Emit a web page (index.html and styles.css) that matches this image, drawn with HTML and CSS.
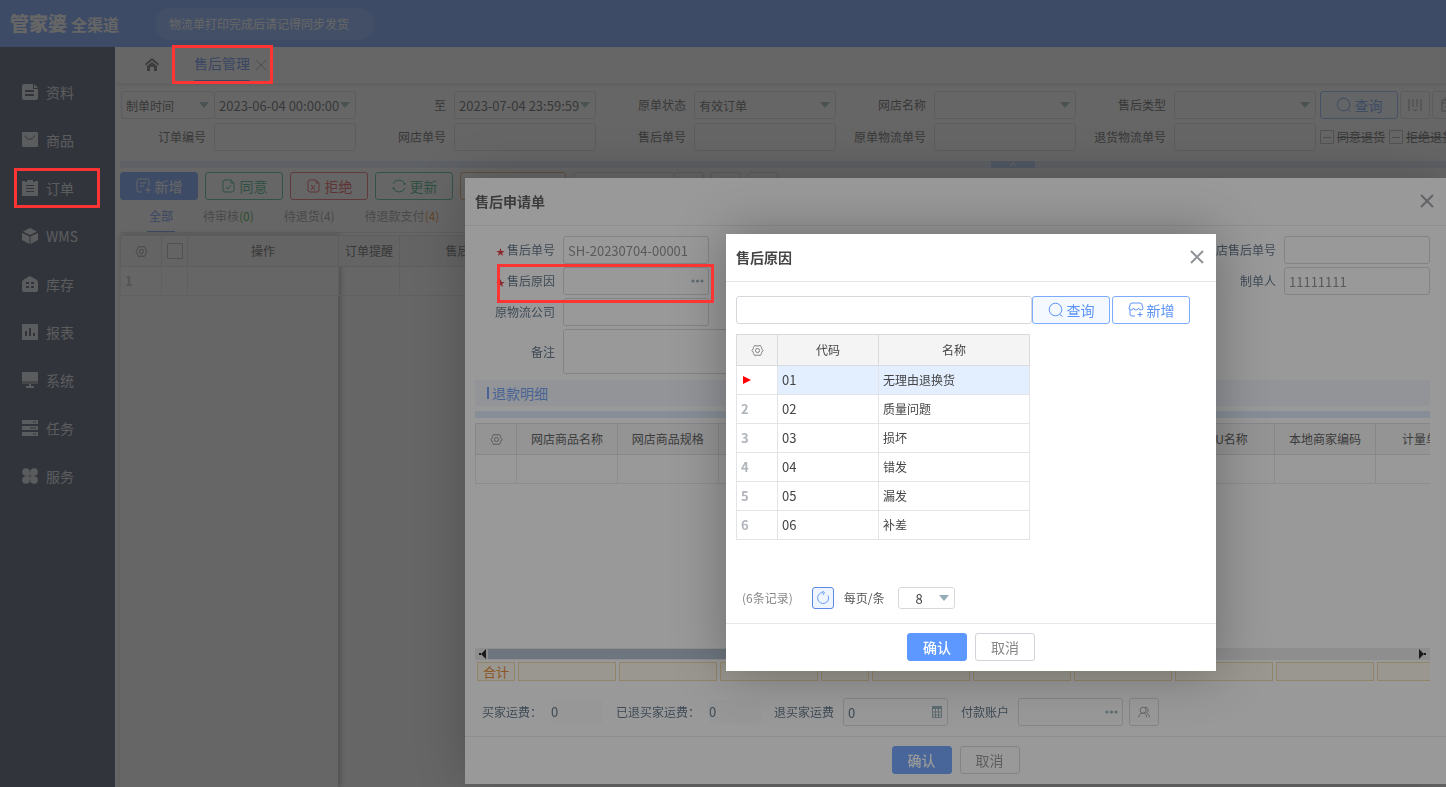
FILE: index.html
```html
<!DOCTYPE html>
<html lang="zh-CN">

<head>
    <meta charset="utf-8">
    <meta name="viewport" content="width=device-width, initial-scale=1.0">
    <title>售后管理</title>
    <link rel="stylesheet" href="styles.css">
</head>

<body>
    <svg class="symbols" aria-hidden="true">
        <symbol id="i-gear" viewBox="0 0 14 14">
            <path d="M4 1.500L5.500 2h3L10 1.500l1.500 2.500v1L13 7l-1.500 2v1L10 12.500 8.500 12h-3L4 12.500 2.500 10V9L1 7l1.500-2V4z" />
            <circle cx="7" cy="7" r="2.200" />
        </symbol>
        <symbol id="i-search" viewBox="0 0 16 16">
            <circle cx="7.500" cy="7.500" r="6.300" />
            <path d="M12 12.500l2.500 2" />
        </symbol>
        <symbol id="i-close" viewBox="0 0 14 14">
            <path d="M1 1l12 12M13 1L1 13" />
        </symbol>
        <symbol id="i-dots" viewBox="0 0 14 4">
            <circle cx="2" cy="2" r="1.600" />
            <circle cx="6.500" cy="2" r="1.600" />
            <circle cx="11" cy="2" r="1.600" />
        </symbol>
    </svg>

    <header class="top">
        <h1 class="logo">管家婆<small>全渠道</small></h1>
        <p class="notice">物流单打印完成后请记得同步发货</p>
    </header>

    <div class="page">
        <nav class="side">
            <a href="#"><svg viewBox="0 0 16 16"><path d="M2 0h9v5h5v9a2 2 0 0 1-2 2H2a2 2 0 0 1-2-2V2a2 2 0 0 1 2-2z" /><path d="M12 0l4 4h-4z" /><path class="cut" d="M3 7h9M3 11h9" /></svg>资料</a>
            <a href="#"><svg viewBox="0 0 16 16"><rect width="16" height="15" rx="1" /><path class="cut thin" d="M3 3.500c1 5 8 5 9.500 0" /></svg>商品</a>
            <a href="#"><svg viewBox="0 0 16 16"><path d="M0 1h3v1h2V0h6v2h2V1h3v14a1 1 0 0 1-1 1H1a1 1 0 0 1-1-1z" /><path class="cut thin" d="M4 5.500h8M4 8.500h8M4 11.500h8" /></svg>订单</a>
            <a href="#"><svg viewBox="0 0 16 16"><path d="M8 0l7 3.500L8 7 1 3.500zM0 5l7.500 3.500V16L0 12zM16 5L8.500 8.500V16L16 12z" /></svg>WMS</a>
            <a href="#"><svg viewBox="0 0 16 16"><path d="M8 0l7 4 1 2v8a2 2 0 0 1-2 2H2a2 2 0 0 1-2-2V6l1-2z" /><path class="cut" d="M4 7h3M9 7h3M4 11h3M9 11h3" /></svg>库存</a>
            <a href="#"><svg viewBox="0 0 16 16"><rect width="16" height="16" rx="1" /><path class="cut" d="M4 7v5M8 4v8M12 9v3" /></svg>报表</a>
            <a href="#"><svg viewBox="0 0 16 16"><path d="M0 0h16v9H0z" /><path class="pale" d="M0 9h16v3H0z" /><path d="M7 12h2v2h3v2H4v-2h3z" /></svg>系统</a>
            <a href="#"><svg viewBox="0 0 16 16"><path d="M0 0h16v4H0zM0 6h16v4H0zM0 12h16v4H0z" /><path class="cut thin" d="M11 2h3M8 8h6M11 14h3" /></svg>任务</a>
            <a href="#"><svg viewBox="0 0 16 16"><circle cx="4" cy="4" r="3.800" /><circle cx="12" cy="4" r="3.800" /><circle cx="4" cy="12" r="3.800" /><circle cx="12" cy="12" r="3.800" /><path d="M4 4h3.700v3.700H4zM8.300 4H12v3.700H8.300zM4 8.300h3.700V12H4zM8.300 8.300H12V12H8.300z" /></svg>服务</a>
        </nav>

        <main class="main">
            <div class="tabs">
                <a class="home" href="#" aria-label="首页"><svg viewBox="0 0 14 13"><path d="M7 0l7 6-1 1.500L7 2.500 1 7.500 0 6z" /><path d="M7 4l5 4v5H9V9H5v4H2V8z" /></svg></a>
                <a class="tab" href="#">售后管理</a>
                <button class="tab-close" aria-label="关闭标签"><svg><use href="#i-close" /></svg></button>
            </div>

            <form class="filters">
                <div class="filter">
                    <span class="drop wide"><select aria-label="时间类型"><option>制单时间</option></select></span>
                    <span class="drop box"><input type="text" aria-label="开始时间" value="2023-06-04 00:00:00"></span>
                </div>
                <div class="filter">
                    <label for="f-to">至</label>
                    <span class="drop box"><input type="text" id="f-to" value="2023-07-04 23:59:59"></span>
                </div>
                <div class="filter">
                    <label for="f-state">原单状态</label>
                    <span class="drop box"><select id="f-state"><option>有效订单</option></select></span>
                </div>
                <div class="filter">
                    <label for="f-shop">网店名称</label>
                    <span class="drop box"><select id="f-shop"><option></option></select></span>
                </div>
                <div class="filter">
                    <label for="f-type">售后类型</label>
                    <span class="drop box"><select id="f-type"><option></option></select></span>
                </div>
                <div class="filter-end">
                    <button type="button" class="btn blue"><svg><use href="#i-search" /></svg>查询</button>
                    <button type="button" class="btn square" aria-label="列设置"><svg viewBox="0 0 14 14"><path d="M1 1v12M5 1v8M9 1v8M13 1v12M5 11l2 2 2-2" /></svg></button>
                    <button type="button" class="btn square" aria-label="保存条件"><svg viewBox="0 0 14 14"><path d="M2 2h10v11H2zM2 5h10M5 0v3M9 0v3M5 9h5" /></svg></button>
                </div>
                <div class="filter"><label for="f-no">订单编号</label><span class="box"><input type="text" id="f-no"></span></div>
                <div class="filter"><label for="f-shopno">网店单号</label><span class="box"><input type="text" id="f-shopno"></span></div>
                <div class="filter"><label for="f-after">售后单号</label><span class="box"><input type="text" id="f-after"></span></div>
                <div class="filter"><label for="f-ship">原单物流单号</label><span class="box"><input type="text" id="f-ship"></span></div>
                <div class="filter"><label for="f-back">退货物流单号</label><span class="box"><input type="text" id="f-back"></span></div>
                <div class="filter-end checks">
                    <label><input type="checkbox" class="minus">同意退货</label>
                    <label><input type="checkbox" class="minus">拒绝退货</label>
                </div>
            </form>

            <div class="fold"><button aria-label="收起"><svg viewBox="0 0 8 5"><path d="M1 4l3-3 3 3" /></svg></button></div>

            <div class="tools">
                <button class="btn solid"><svg viewBox="0 0 16 16"><path d="M6 14H3a2 2 0 0 1-2-2V3a2 2 0 0 1 2-2h8a2 2 0 0 1 2 2v5M4 5h6M4 8h4M12 9v6M9 12h6" /></svg>新增</button>
                <button class="btn green"><svg viewBox="0 0 16 16"><path d="M4 2h6l3 3v7a2 2 0 0 1-2 2H4a2 2 0 0 1-2-2V4a2 2 0 0 1 2-2zM10 2v3h3M5 9l2 2 3-4" /></svg>同意</button>
                <button class="btn red"><svg viewBox="0 0 16 16"><path d="M4 2h6l3 3v7a2 2 0 0 1-2 2H4a2 2 0 0 1-2-2V4a2 2 0 0 1 2-2zM10 2v3h3M5 7l4 5M9 7l-4 5" /></svg>拒绝</button>
                <button class="btn green"><svg viewBox="0 0 16 16"><path d="M2 6a6.500 6.500 0 0 1 12 0M14 10a6.500 6.500 0 0 1-12 0M1 10h3M15 6h-3" /></svg>更新</button>
                <button class="btn orange" aria-label="退款"></button>
                <button class="btn group" aria-label="更多"></button>
                <button class="btn square joined" aria-label="展开"></button>
                <button class="btn square" aria-label="打印"></button>
                <button class="btn square" aria-label="导出"></button>
            </div>

            <div class="states">
                <a class="on" href="#">全部</a>
                <a href="#">待审核<b class="g">(0)</b></a>
                <a href="#">待退货<b>(4)</b></a>
                <a href="#">待退款支付<b class="o">(4)</b></a>
            </div>

            <div class="sheet">
                <div class="frozen">
                    <table class="grid">
                        <tr><th class="c-no"><svg class="gear"><use href="#i-gear" /></svg></th><th class="c-check"><input type="checkbox" aria-label="全选"></th><th class="c-op">操作</th></tr>
                        <tr><td class="no">1</td><td></td><td></td></tr>
                    </table>
                </div>
                <table class="grid rest">
                    <tr><th class="c-tip">订单提醒</th><th class="c-after">售后单号</th><th></th></tr>
                    <tr><td></td><td></td><td></td></tr>
                </table>
            </div>
        </main>
    </div>

    <div class="mask"></div>

    <section class="dialog apply">
        <div class="dialog-head">
            <h2>售后申请单</h2>
            <button class="close" aria-label="关闭"><svg><use href="#i-close" /></svg></button>
        </div>
        <div class="dialog-body">
            <div class="fields">
                <label class="must" for="a-no">售后单号</label>
                <span class="box"><input type="text" id="a-no" value="SH-20230704-00001" disabled></span>
                <label for="a-shop">网店售后单号</label>
                <span class="box"><input type="text" id="a-shop"></span>
                <label class="must" for="a-why">售后原因</label>
                <span class="box"><input type="text" id="a-why"><svg class="dots"><use href="#i-dots" /></svg></span>
                <label for="a-man">制单人</label>
                <span class="box"><input type="text" id="a-man" value="11111111" disabled></span>
                <label for="a-ship">原物流公司</label>
                <span class="box"><input type="text" id="a-ship"></span>
                <label class="note" for="a-note">备注</label>
                <textarea id="a-note"></textarea>
            </div>
            <h3 class="part">退款明细</h3>
            <div class="line"></div>
            <div class="scroll">
                <table class="grid detail">
                    <tr><th class="c-no"><svg class="gear"><use href="#i-gear" /></svg></th><th>网店商品名称</th><th>网店商品规格</th><th></th><th class="half"></th><th></th><th></th><th></th><th>SKU名称</th><th>本地商家编码</th><th>计量单位</th></tr>
                    <tr><td></td><td></td><td></td><td></td><td></td><td></td><td></td><td></td><td></td><td></td><td></td></tr>
                </table>
            </div>
            <div class="hbar">
                <svg viewBox="0 0 8 10"><path d="M7 0v10L2 5zM0 4h2v2H0z" /></svg>
                <span class="thumb"></span>
                <svg viewBox="0 0 8 10"><path d="M1 0v10l5-5zM6 4h2v2H6z" /></svg>
            </div>
            <div class="sum">
                <span class="first">合计</span><span></span><span></span><span></span><span class="half"></span><span></span><span></span><span></span><span></span><span></span><span></span>
            </div>
            <div class="fees">
                <span>买家运费：</span><output>0</output>
                <span>已退买家运费：</span><output>0</output>
                <label for="a-fee">退买家运费</label>
                <span class="box"><input type="text" id="a-fee" value="0"><svg class="calc" viewBox="0 0 10 12"><path d="M0 0h10v3H0z" /><path class="cells" d="M.5 3v8.500h9V3M.5 6h9M.5 9h9M3.500 3v8M6.500 3v8" /></svg></span>
                <label for="a-pay">付款账户</label>
                <span class="box"><input type="text" id="a-pay"><svg class="dots"><use href="#i-dots" /></svg></span>
                <button class="btn square" aria-label="选择账户"><svg viewBox="0 0 16 16"><circle cx="7" cy="6" r="3.500" /><path d="M2 14c0-3 2-4.500 5-4.500s4 2 4 4.500M9 2.500a3.500 3.500 0 0 1 2 6.500c2 1 3 3 3 5" /></svg></button>
            </div>
        </div>
        <div class="dialog-foot">
            <button class="ok">确认</button>
            <button class="cancel">取消</button>
        </div>
    </section>

    <div class="mask"></div>

    <section class="dialog reason">
        <div class="dialog-head">
            <h2>售后原因</h2>
            <button class="close" aria-label="关闭"><svg><use href="#i-close" /></svg></button>
        </div>
        <div class="dialog-body">
            <div class="search">
                <span class="box"><input type="text" aria-label="关键字"></span>
                <button class="btn blue"><svg><use href="#i-search" /></svg>查询</button>
                <button class="btn blue plain"><svg viewBox="0 0 16 16"><path d="M7 14H4a2 2 0 0 1-2-2V8M1 6l1-3q0-2 2-2h8q2 0 2 2l1 3q0 2-2 2t-2.500-2Q10 8 8 8T5.500 6Q5 8 3 8T1 6M12 10v5M9.500 12.500h5" /></svg>新增</button>
            </div>
            <table class="grid reasons">
                <tr><th class="c-no"><svg class="gear"><use href="#i-gear" /></svg></th><th class="c-code">代码</th><th>名称</th></tr>
                <tr class="on"><td class="no"><i class="mark"></i></td><td>01</td><td class="cn">无理由退换货</td></tr>
                <tr><td class="no">2</td><td>02</td><td class="cn">质量问题</td></tr>
                <tr><td class="no">3</td><td>03</td><td class="cn">损坏</td></tr>
                <tr><td class="no">4</td><td>04</td><td class="cn">错发</td></tr>
                <tr><td class="no">5</td><td>05</td><td class="cn">漏发</td></tr>
                <tr><td class="no">6</td><td>06</td><td class="cn">补差</td></tr>
            </table>
            <div class="pager">
                <span>(6条记录)</span>
                <button aria-label="刷新"><svg viewBox="0 0 14 14"><path d="M12 4.500a5.500 5.500 0 1 1-5-3M6 0l2.500 1.500L7 4" /></svg></button>
                <label for="size">每页/条</label>
                <span class="drop"><select id="size"><option>8</option></select></span>
            </div>
        </div>
        <div class="dialog-foot">
            <button class="ok">确认</button>
            <button class="cancel">取消</button>
        </div>
    </section>

    <div class="hint hint-tab"></div>
    <div class="hint hint-menu"></div>
    <div class="hint hint-reason"></div>
</body>

</html>
```
FILE: styles.css
```css
* {
    box-sizing: border-box;
}

body {
    margin: 0;
    height: 100vh;
    overflow: hidden;
    display: flex;
    flex-direction: column;
    background-color: white;
    color: #444;
    font-family: "Noto Sans CJK SC", sans-serif;
    font-size: 12px;
    line-height: 18px;
}

a {
    color: inherit;
    text-decoration: none;
}

input,
select,
textarea,
button {
    font-family: inherit;
    font-size: 12px;
    color: inherit;
    margin: 0;
}

svg {
    fill: none;
    stroke: currentColor;
    flex: none;
}

.symbols {
    display: none;
}

/* top bar */
.top {
    flex: none;
    height: 47px;
    display: flex;
    align-items: center;
    background-color: #5c93ff;
    color: white;
}

.logo {
    width: 155px;
    margin: 0;
    padding-left: 10px;
    font-size: 19px;
    font-weight: 900;
}

.logo small {
    margin-left: 4px;
    font-size: 16px;
    font-weight: 700;
}

.notice {
    margin: 0;
    width: 220px;
    padding: 7px 14px;
    border-radius: 16px;
    background-color: #6ea2ff;
}

.page {
    flex: 1;
    display: flex;
    min-height: 0;
}

/* left menu */
.side {
    flex: none;
    width: 115px;
    padding-top: 21px;
    background-color: #2b3753;
    color: #d3d6dc;
}

.side a {
    display: flex;
    align-items: center;
    height: 48px;
    padding-left: 22px;
    gap: 8px;
    font-size: 14px;
}

.side svg {
    width: 16px;
    height: 16px;
    fill: currentColor;
    stroke: none;
}

.side .cut {
    fill: none;
    stroke: #2b3753;
    stroke-width: 2;
}

.side .thin {
    stroke-width: 1;
}

.side .pale {
    opacity: 0.5;
}

.main {
    flex: 1;
    min-width: 0;
    display: flex;
    flex-direction: column;
    overflow: hidden;
}

.tabs {
    flex: none;
    height: 37px;
    display: flex;
    align-items: flex-start;
    border-bottom: 1px solid #eee;
    box-shadow: 0 1px 3px #ddd;
}

.home {
    margin: 11px 35px 0 30px;
}

.home svg {
    display: block;
    width: 14px;
    height: 13px;
    fill: #555;
    stroke: none;
}

.tab {
    height: 34px;
    padding-top: 7px;
    border-bottom: 1px solid #4a80f0;
    color: #4a80f0;
    font-size: 14px;
}

.tab-close {
    margin: 12px 0 0 5px;
    padding: 0;
    border: none;
    background: none;
    color: #888;
}

.tab-close svg {
    display: block;
    width: 12px;
    height: 12px;
}

/* filters */
.filters {
    flex: none;
    display: grid;
    grid-template-columns: repeat(5, 240px) auto;
    gap: 4px 0;
    padding: 7px 0 10px 1px;
}

.filter {
    display: flex;
    align-items: center;
    justify-content: flex-end;
    gap: 8px;
}

.filter:first-child {
    gap: 0;
}

.box {
    display: flex;
    align-items: center;
    width: 142px;
    height: 28px;
    border: 1px solid #d5d7dc;
    border-radius: 3px;
}

.box input,
.drop select {
    width: 100%;
    height: 26px;
    padding: 0 4px;
    border: none;
    background: none;
    outline: none;
    appearance: none;
}

.box input {
    font-size: 13px;
}

.drop {
    position: relative;
}

.drop::after {
    content: "";
    position: absolute;
    right: 5px;
    top: 10px;
    border: 5px solid transparent;
    border-top: 6px solid #93adb5;
    border-bottom: none;
}

.wide {
    width: 93px;
    height: 28px;
    border: 1px solid #d5d7dc;
    border-right: none;
    border-radius: 3px;
}

.filter-end {
    display: flex;
    align-items: center;
    gap: 2px;
    padding-left: 4px;
    white-space: nowrap;
}

.checks {
    gap: 4px;
}

.checks label {
    display: flex;
    align-items: center;
    gap: 3px;
    text-decoration: line-through;
}

.minus,
.grid input {
    appearance: none;
    width: 14px;
    height: 14px;
    border: 1px solid #aaa;
    border-radius: 1px;
}

.minus {
    display: flex;
    align-items: center;
    justify-content: center;
}

.minus::after {
    content: "";
    width: 8px;
    border-top: 1px solid #999;
}

.btn {
    display: flex;
    align-items: center;
    justify-content: center;
    gap: 3px;
    flex: none;
    width: 78px;
    height: 28px;
    padding: 0;
    border: 1px solid #d5d7dc;
    border-radius: 3px;
    background: none;
    font-size: 14px;
}

.btn svg {
    width: 16px;
    height: 16px;
}

.btn.square {
    width: 30px;
    color: #888;
}

.btn.square svg {
    width: 14px;
    height: 14px;
}

.btn.blue {
    color: #5c93f5;
    border-color: #7cabff;
    background-color: #f3f9ff;
}

.btn.plain {
    background-color: white;
}

.btn.solid {
    color: white;
    border-color: #5c93ff;
    background-color: #5c93ff;
}

.btn.green {
    color: #1ea56e;
    border-color: #2fae7c;
}

.btn.red {
    color: #e0363d;
    border-color: #e04a50;
}

.btn.orange {
    width: 106px;
    border-color: #e69b4c;
}

.btn.group {
    width: 102px;
}

.btn.joined {
    margin-left: -8px;
}

.fold {
    flex: none;
    height: 7px;
    margin-left: 5px;
    display: flex;
    justify-content: center;
    padding-left: 459px;
    background-color: #dce6f8;
}

.fold button {
    width: 44px;
    height: 7px;
    padding: 0;
    border: none;
    background-color: #a8c8f8;
    color: white;
}

.fold svg {
    display: block;
    width: 8px;
    height: 5px;
    margin: auto;
}

.tools {
    flex: none;
    display: flex;
    gap: 7px;
    padding: 4px 0 0 5px;
}

.states {
    flex: none;
    display: flex;
    gap: 26px;
    height: 33px;
    margin: 0 0 2px 5px;
    padding: 7px 0 0 27px;
    border-bottom: 1px solid #e2e2e2;
    color: #888;
}

.states a {
    padding: 0 2px;
}

.states .on {
    height: 25px;
    border-bottom: 1px solid #4a80f0;
    color: #4a80f0;
}

.states b {
    font-weight: 400;
}

.states .g {
    color: #219a21;
}

.states .o {
    color: #e8760d;
}

/* tables */
.grid {
    table-layout: fixed;
    border-collapse: collapse;
}

.grid th {
    height: 31px;
    padding: 0;
    border: 1px solid #d9dadd;
    background-color: #f4f4f4;
    font-weight: 400;
}

.grid td {
    height: 29px;
    padding: 0 4px;
    border: 1px solid #e3e4e7;
    font-size: 13px;
}

.grid .cn {
    font-size: 12px;
}

.grid .no {
    color: #b0b4bb;
    font-weight: 700;
}

.grid input {
    display: block;
    width: 16px;
    height: 16px;
    margin: auto;
}

.c-no {
    width: 41px;
}

.c-check {
    width: 26px;
}

.c-op {
    width: 151px;
}

.c-tip {
    width: 61px;
}

.c-after {
    width: 140px;
}

.c-code {
    width: 101px;
}

.gear {
    display: block;
    width: 13px;
    height: 13px;
    margin: auto;
    color: #777;
}

.sheet {
    flex: 1;
    display: flex;
    padding-left: 5px;
}

.frozen {
    width: 218px;
    box-shadow: 2px 0 6px #888;
}

.frozen .grid {
    width: 218px;
}

.rest {
    flex: 1;
    align-self: flex-start;
}

/* dialogs */
.mask {
    position: fixed;
    inset: 0;
    background-color: rgba(51, 51, 51, 0.5);
}

.dialog {
    position: fixed;
    display: flex;
    flex-direction: column;
    background-color: white;
    box-shadow: 0 0 50px rgba(0, 0, 0, 0.3);
}

.apply {
    top: 178px;
    left: 465px;
    right: 0;
    bottom: 3px;
}

.reason {
    top: 234px;
    left: 726px;
    width: 490px;
    height: 437px;
}

.dialog-head {
    flex: none;
    height: 48px;
    display: flex;
    align-items: center;
    justify-content: space-between;
    padding: 0 12px 2px 10px;
    border-bottom: 1px solid #e8e8e8;
}

.dialog-head h2 {
    margin: 0;
    font-size: 14px;
    font-weight: 700;
}

.close {
    padding: 0;
    border: none;
    background: none;
    color: #909399;
}

.close svg {
    display: block;
    width: 14px;
    height: 14px;
    stroke-width: 2;
}

.dialog-body {
    flex: 1;
    min-height: 0;
    display: flex;
    flex-direction: column;
    padding: 10px 16px 0 10px;
}

.dialog-foot {
    flex: none;
    height: 48px;
    display: flex;
    justify-content: center;
    gap: 8px;
    padding-top: 9px;
    border-top: 1px solid #e8e8e8;
}

.dialog-foot button {
    width: 60px;
    height: 28px;
    padding: 0;
    border: 1px solid #d0d3d9;
    border-radius: 3px;
    background-color: white;
    color: #888;
    font-size: 14px;
}

.dialog-foot .ok {
    border-color: #5c98ff;
    background-color: #5c98ff;
    color: white;
    font-weight: 500;
}

.fields {
    display: grid;
    grid-template-columns: 80px 146px 1fr 146px;
    gap: 3px 8px;
    color: #4a6178;
}

.fields label {
    height: 28px;
    text-align: right;
    line-height: 28px;
}

.fields .box {
    width: 146px;
    border-color: #cfd2d8;
}

.fields input {
    color: #808080;
}

.must::before {
    content: "★";
    margin-right: 2px;
    font-size: 9px;
    line-height: 9px;
    color: #e0202a;
}

.fields .note {
    grid-column: 1;
    align-self: center;
}

.fields textarea {
    grid-column: 2 / 4;
    width: 400px;
    height: 45px;
    border: 1px solid #cfd2d8;
    border-radius: 3px;
    resize: none;
}

.box .dots {
    width: 14px;
    height: 4px;
    margin-right: 3px;
    fill: #8ba5b0;
    stroke: none;
}

.part {
    flex: none;
    height: 26px;
    margin: 6px 0 5px;
    padding: 4px 12px;
    background-color: #f0f5fc;
    color: #5c93f5;
    font-size: 14px;
    font-weight: 400;
}

.part::before {
    content: "";
    display: inline-block;
    width: 2px;
    height: 12px;
    margin-right: 3px;
    background-color: #5c93f5;
}

.line {
    flex: none;
    height: 7px;
    background-color: #dbe8fa;
}

.scroll {
    flex: 1;
    margin-top: 5px;
    overflow: hidden;
}

.detail {
    width: 1002px;
}

.detail .half {
    width: 52px;
}

.hbar {
    flex: none;
    height: 12px;
    display: flex;
    align-items: center;
    justify-content: space-between;
    padding: 0 4px;
    background-color: #e8e8e8;
}

.hbar svg {
    width: 8px;
    height: 10px;
    fill: black;
    stroke: none;
}

.thumb {
    width: 560px;
    height: 10px;
    margin: 0 auto 0 1px;
    background-color: #a8b6c8;
}

.sum {
    flex: none;
    display: flex;
    gap: 3px;
    margin-top: 2px;
    padding-left: 2px;
    overflow: hidden;
}

.sum span {
    flex: none;
    width: 98px;
    height: 19px;
    border: 1px solid #f0d49c;
    background-color: #fffaeb;
}

.sum .first {
    width: 38px;
    text-align: center;
    color: #e8760d;
    font-size: 13px;
}

.sum .half {
    width: 48px;
}

.fees {
    flex: none;
    display: flex;
    align-items: center;
    height: 55px;
    padding: 7px 0 0 7px;
    color: #4a6178;
}

.fees output {
    width: 52px;
    height: 24px;
    margin: 0 13px 0 9px;
    background-color: #fbfbfb;
    font-size: 13px;
    line-height: 24px;
}

.fees .box {
    width: 105px;
    margin: 0 13px 0 9px;
}

.fees .box + .btn {
    margin-left: -7px;
}

.calc {
    width: 10px;
    height: 12px;
    margin-right: 5px;
    fill: #8ba5b0;
    stroke: none;
}

.calc .cells {
    fill: none;
    stroke: #8ba5b0;
}

/* reason dialog */
.reason .dialog-body {
    padding-top: 14px;
}

.search {
    display: flex;
    gap: 2px;
    margin-bottom: 10px;
}

.search .box {
    width: 296px;
    margin-right: -2px;
}

.reasons {
    width: 294px;
}

.reasons .on td + td {
    background-color: #e3efff;
}

.mark {
    display: block;
    width: 0;
    margin-left: 2px;
    border: 4px solid transparent;
    border-left: 8px solid red;
    border-right: none;
}

.pager {
    display: flex;
    align-items: center;
    margin-top: auto;
    padding: 0 0 14px 6px;
    color: #888;
}

.pager button {
    width: 22px;
    height: 22px;
    margin: 0 10px 0 19px;
    padding: 3px;
    border: 1px solid #5c88e8;
    border-radius: 3px;
    background-color: #eef5ff;
    color: #6c9bf5;
}

.pager button svg {
    display: block;
    width: 14px;
    height: 14px;
}

.pager label {
    color: #555;
}

.pager .drop {
    width: 57px;
    height: 22px;
    margin-left: 13px;
    border: 1px solid #d5d9dc;
    border-radius: 3px;
    color: #444;
}

.pager .drop::after {
    top: 7px;
}

.pager select {
    display: block;
    height: 20px;
    padding-left: 17px;
    font-size: 13px;
}

/* red frames over the steps to click */
.hint {
    position: fixed;
    border: 3px solid #fc3434;
}

.hint-tab {
    left: 172px;
    top: 45px;
    width: 101px;
    height: 39px;
}

.hint-menu {
    left: 14px;
    top: 168px;
    width: 86px;
    height: 40px;
}

.hint-reason {
    left: 497px;
    top: 264px;
    width: 217px;
    height: 39px;
}
```
